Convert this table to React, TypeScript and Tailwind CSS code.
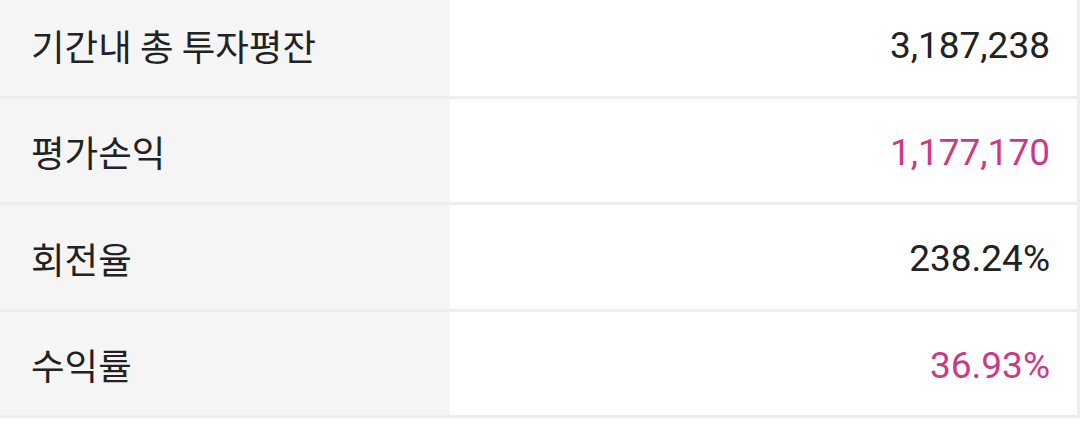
import React from "react";

const rows = [
  { label: "기간내 총 투자평잔", value: "3,187,238", pink: false, h: "h-[107px]" },
  { label: "평가손익", value: "1,177,170", pink: true, h: "h-[106px]" },
  { label: "회전율", value: "238.24%", pink: false, h: "h-[107px]" },
  { label: "수익률", value: "36.93%", pink: true, h: "h-[106px]" },
];

export default function App() {
  return (
    <div className="w-[1080px] h-[426px] overflow-hidden bg-white">
      <div className="-mt-[8px] w-[1080px] border-r-[3px] border-[#eeeeee] box-border">
        {rows.map((r, i) => (
          <div key={i} className={`flex ${r.h} border-b-[3px] border-[#eeeeee] box-border`}>
            <div
              className="w-[450px] bg-[#f5f5f5] flex items-center pl-[31px] pt-[4px] text-[36.5px] text-[#222222]"
              style={{ fontFamily: '"Noto Sans CJK KR", "Noto Sans", sans-serif' }}
            >
              {r.label}
            </div>
            <div
              className={`flex-1 bg-white flex items-center justify-end pr-[27px] pt-[4px] text-[37px] ${
                r.pink ? "text-[#cc3a86]" : "text-[#222222]"
              }`}
              style={{ fontFamily: "Roboto, sans-serif" }}
            >
              {r.value}
            </div>
          </div>
        ))}
      </div>
    </div>
  );
}
